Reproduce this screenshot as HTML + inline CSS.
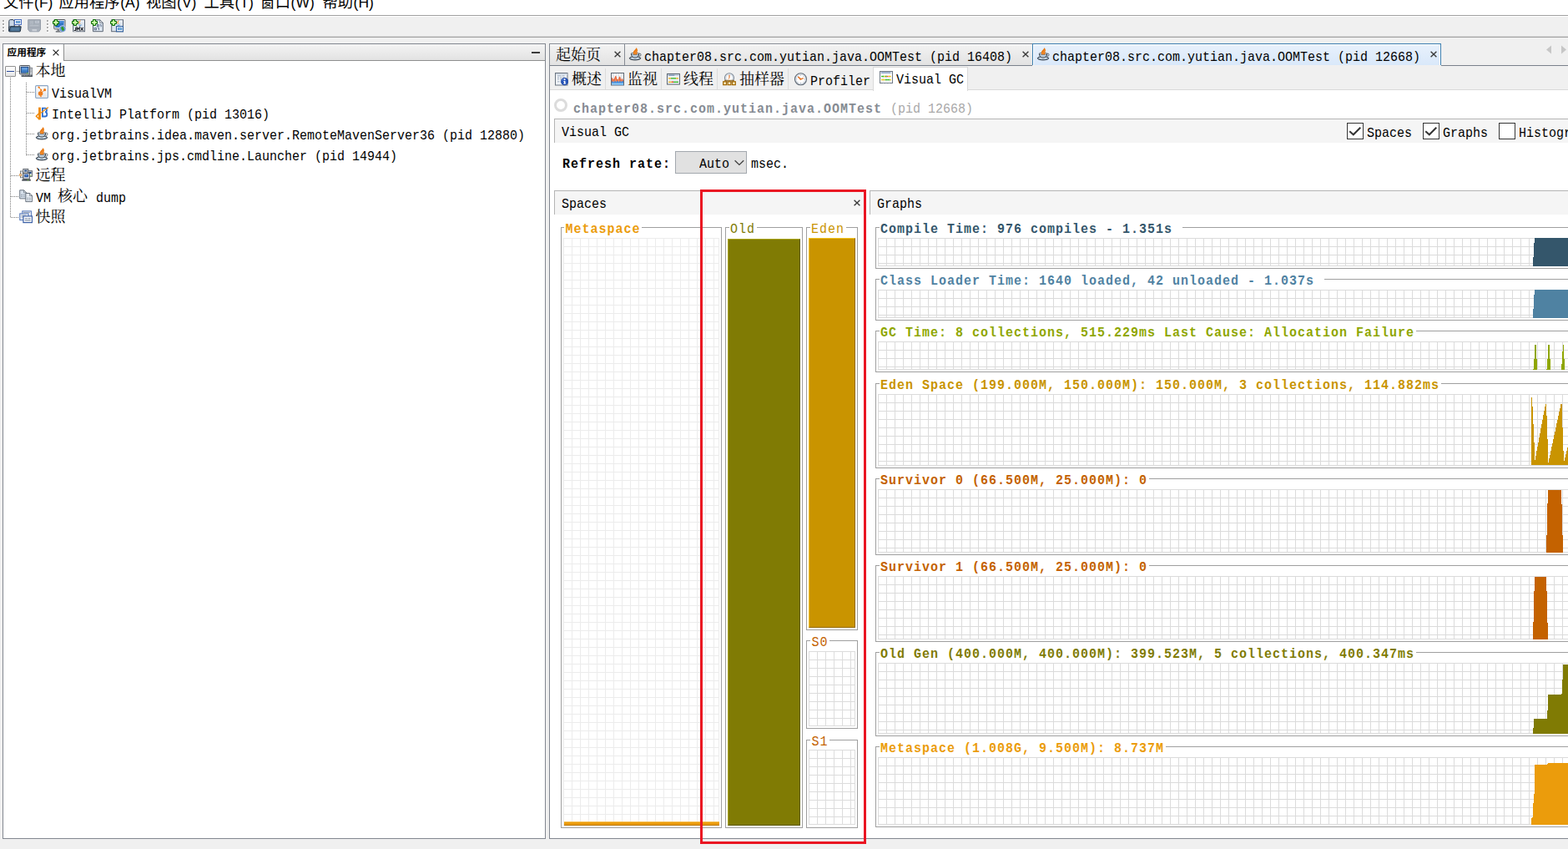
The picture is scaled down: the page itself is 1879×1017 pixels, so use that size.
<!DOCTYPE html>
<html lang="zh"><head><meta charset="utf-8"><title>VisualVM - Visual GC</title>
<style>
html,body{margin:0;padding:0}
body{width:1879px;height:1017px;overflow:hidden;background:#f0f0f0;position:relative;font-family:"Liberation Mono",monospace;font-size:15px}
body div,body span.m,body span.cj,svg.ic,.abs{position:absolute;box-sizing:border-box}
.m{font-family:"Liberation Mono",monospace;font-size:15px;line-height:18px;height:18px;white-space:pre;transform:scaleY(1.13);transform-origin:0 12px}
.m.b{font-weight:bold;letter-spacing:1px}
.s{font-family:"Liberation Sans",sans-serif}
.cj{display:block;overflow:visible}
.ct{position:absolute;left:0;top:0;color:#000;white-space:nowrap;font-family:"Liberation Sans","Noto Sans CJK SC",sans-serif;overflow:visible;width:100%;height:100%}
.ct.sf{font-family:"Liberation Serif","Noto Serif CJK SC",serif}
.ct.bd{font-weight:bold}

</style></head>
<body>
<div style="left:0px;top:0px;width:1879px;height:18px;background:#fff"></div>
<div style="left:0px;top:18px;width:1879px;height:1px;background:#a0a0a0"></div>
<div style="left:0px;top:19px;width:1879px;height:1px;background:#fff"></div>
<span class="cj" style="left:4px;top:-6px;width:36.6px;height:18.3px"><span class="ct" style="font-size:18.3px;line-height:18.3px">文件</span></span>
<span class="abs s" style="left:41.1px;top:-7px;font-size:17.5px;line-height:20px;white-space:pre">(F)</span>
<span class="cj" style="left:70.5px;top:-6px;width:73.2px;height:18.3px"><span class="ct" style="font-size:18.3px;line-height:18.3px">应用程序</span></span>
<span class="abs s" style="left:144.2px;top:-7px;font-size:17.5px;line-height:20px;white-space:pre">(A)</span>
<span class="cj" style="left:175px;top:-6px;width:36.6px;height:18.3px"><span class="ct" style="font-size:18.3px;line-height:18.3px">视图</span></span>
<span class="abs s" style="left:212.1px;top:-7px;font-size:17.5px;line-height:20px;white-space:pre">(V)</span>
<span class="cj" style="left:244.5px;top:-6px;width:36.6px;height:18.3px"><span class="ct" style="font-size:18.3px;line-height:18.3px">工具</span></span>
<span class="abs s" style="left:281.6px;top:-7px;font-size:17.5px;line-height:20px;white-space:pre">(T)</span>
<span class="cj" style="left:311.5px;top:-6px;width:36.6px;height:18.3px"><span class="ct" style="font-size:18.3px;line-height:18.3px">窗口</span></span>
<span class="abs s" style="left:348.6px;top:-7px;font-size:17.5px;line-height:20px;white-space:pre">(W)</span>
<span class="cj" style="left:386.5px;top:-6px;width:36.6px;height:18.3px"><span class="ct" style="font-size:18.3px;line-height:18.3px">帮助</span></span>
<span class="abs s" style="left:423.6px;top:-7px;font-size:17.5px;line-height:20px;white-space:pre">(H)</span>
<div style="left:0px;top:44px;width:1879px;height:1px;background:#a0a0a0"></div>
<div style="left:0px;top:43px;width:1879px;height:1px;background:#dcdcdc"></div>
<div style="left:3px;top:24px;width:3px;height:3px;background:#fff"></div>
<div style="left:3px;top:24px;width:2px;height:2px;background:#adadad"></div>
<div style="left:3px;top:28px;width:3px;height:3px;background:#fff"></div>
<div style="left:3px;top:28px;width:2px;height:2px;background:#adadad"></div>
<div style="left:3px;top:32px;width:3px;height:3px;background:#fff"></div>
<div style="left:3px;top:32px;width:2px;height:2px;background:#adadad"></div>
<div style="left:3px;top:36px;width:3px;height:3px;background:#fff"></div>
<div style="left:3px;top:36px;width:2px;height:2px;background:#adadad"></div>
<div style="left:56px;top:24px;width:3px;height:3px;background:#fff"></div>
<div style="left:56px;top:24px;width:2px;height:2px;background:#adadad"></div>
<div style="left:56px;top:28px;width:3px;height:3px;background:#fff"></div>
<div style="left:56px;top:28px;width:2px;height:2px;background:#adadad"></div>
<div style="left:56px;top:32px;width:3px;height:3px;background:#fff"></div>
<div style="left:56px;top:32px;width:2px;height:2px;background:#adadad"></div>
<div style="left:56px;top:36px;width:3px;height:3px;background:#fff"></div>
<div style="left:56px;top:36px;width:2px;height:2px;background:#adadad"></div>
<svg class="ic" style="left:10px;top:23px" width="16" height="16" viewBox="0 0 16 16"><path d="M.8 14.300V2.600C.8 1.300 1.600.6 2.600.6h3.200l1.400 2V9H.8z" fill="#c9d7e6" stroke="#2b3b4d" stroke-width="1"/><path d="M2.800 8.800h12.400l-.8 5.400c-.1.500-.4.700-.9.700H1.600c-.5 0-.8-.3-.8-.8z" fill="#3f6486" stroke="#263545" stroke-width="1"/><path d="M3.800 10v4M5.500 10v4M7.200 10v4M8.900 10v4M10.600 10v4M12.300 10v4" stroke="#6a95b8" stroke-width=".8"/><path d="M13 6.800v2" stroke="#2b3b4d" stroke-width="1"/><rect x="7.500" y=".5" width="8" height="6" fill="#fff" stroke="#4a6fc0"/><rect x="9.300" y="2.500" width="4.600" height="2" fill="#7db3e0" stroke="#3f7fc0" stroke-width=".7"/></svg>
<svg class="ic" style="left:33px;top:23px" width="16" height="16" viewBox="0 0 16 16"><path d="M.7 .7h14.800v11.500l-1.800 2.600H2.500L.7 12.200z" fill="#a9b1bb" stroke="#959da8"/><rect x="2.800" y="1.300" width="4.400" height="5.600" fill="#bcc3cc" stroke="#9aa2ad" stroke-width=".6"/><path d="M3.400 2.800h3.200M3.400 4.200h3.200M3.400 5.600h3.200" stroke="#a2aab4" stroke-width=".7"/><rect x="8.300" y="1.300" width="6" height="3.800" fill="#c2c9d2" stroke="#9aa2ad" stroke-width=".6"/><rect x="9.800" y="2.400" width="3" height="1.500" fill="#b0b8c3"/><path d="M2.800 7.800h10.500" stroke="#bfc6cf" stroke-width=".9"/><path d="M1.500 9.800h13" stroke="#9aa2ad" stroke-width=".7"/><rect x="5.500" y="12" width="5.600" height="2.200" fill="#cdd2d9"/></svg>
<svg class="ic" style="left:63px;top:23px" width="16" height="16" viewBox="0 0 16 16"><rect x="1.800" y=".5" width="13.200" height="11.300" rx=".6" fill="#e3e6ea" stroke="#555b63"/><rect x="3.300" y="2" width="10.200" height="8" fill="#2f73c3"/><path d="M3.300 2h10.200v2.500H3.300z" fill="#4a8ad8"/><path d="M5.500 13.200h5M3.800 14.800h8" stroke="#50565e" stroke-width="1.300"/><circle cx="12" cy="11.500" r="3.800" fill="#6f9fe0" stroke="#dfe8f5" stroke-width=".9"/><circle cx="12" cy="11.500" r="3.300" fill="none" stroke="#4a6fb8" stroke-width=".5"/><path d="M10.400 9.600c1-.8 2.200-.6 3 .1-.3.900 0 1.600.8 2.200-.4 1.200-1.400 2-2.400 2.300.1-1-.2-1.600-1.100-1.800-.5-.9-.5-2-.3-2.800z" fill="#2d9a1e"/><path d="M2.500 .5h3v2h2v3h-2v2h-3v-2h-2v-3h2z" fill="#6fd04a" stroke="#0f6e0a" stroke-width="1"/><path d="M3.300 1.300h1.400v2h2v1.400h-2v2h-1.400v-2h-2v-1.400h2z" fill="#d9f7b8"/></svg>
<svg class="ic" style="left:86px;top:23px" width="16" height="16" viewBox="0 0 16 16"><rect x="1.700" y=".8" width="13.800" height="13.900" fill="#dde6f0" stroke="#5c6675"/><path d="M2.500 1.500h12.200v2H2.500z" fill="#eef3f9"/><path d="M10.300 1.300c1.200 1-.9 1.700-.9 2.600s1 1.300 1.300 2.200c-1.800-.6-2.600-1.500-2.400-2.500.2-1 1.600-1.400 2-2.300z" fill="#ef8a1f"/><path d="M8.300 6.700c1 .6 2.400.6 3.400 0M9 7.800c.8.300 1.600.300 2.300 0" stroke="#3f86d0" stroke-width=".7" fill="none"/><g stroke="#fff" stroke-width="2.400" fill="none" stroke-linejoin="round"><path d="M2.800 13c.4 1 1.900 1 1.900-.3v-2.900M6.200 13.700V9.800l1.500 2 1.500-2v3.900M10.600 9.800l3.200 3.900M13.800 9.800l-3.200 3.900"/></g><g stroke="#20252d" stroke-width="1.200" fill="none"><path d="M2.800 13c.4 1 1.900 1 1.900-.3v-2.900M6.200 13.700V9.800l1.500 2 1.500-2v3.900M10.600 9.800l3.200 3.900M13.800 9.800l-3.200 3.900"/></g><path d="M2.500 .5h3v2h2v3h-2v2h-3v-2h-2v-3h2z" fill="#6fd04a" stroke="#0f6e0a" stroke-width="1"/><path d="M3.300 1.300h1.400v2h2v1.400h-2v2h-1.400v-2h-2v-1.400h2z" fill="#d9f7b8"/></svg>
<svg class="ic" style="left:109px;top:23px" width="16" height="16" viewBox="0 0 16 16"><path d="M2.500 .8h8.300l3.500 3.500v10.400H2.500z" fill="#dde6f0" stroke="#5c6675"/><path d="M10.800 .8v3.500h3.500z" fill="#f8fafc" stroke="#5c6675" stroke-width=".8"/><g stroke="#566785" stroke-width=".9" fill="none"><rect x="7.500" y="6.700" width="1.800" height="2.100"/><path d="M10.800 6.700h1.300v2.500"/><rect x="4.200" y="10.600" width="2.200" height="2.100"/><path d="M8.200 10.600h1.300v2.500"/></g><path d="M2.500 .5h3v2h2v3h-2v2h-3v-2h-2v-3h2z" fill="#6fd04a" stroke="#0f6e0a" stroke-width="1"/><path d="M3.300 1.300h1.400v2h2v1.400h-2v2h-1.400v-2h-2v-1.400h2z" fill="#d9f7b8"/></svg>
<svg class="ic" style="left:132px;top:23px" width="16" height="16" viewBox="0 0 16 16"><rect x="1.700" y=".8" width="13.800" height="13.900" fill="#dde6f0" stroke="#5c6675"/><path d="M2.500 1.500h12.200v2H2.500z" fill="#eef3f9"/><path d="M10.300 1.300c1.200 1-.9 1.700-.9 2.600s1 1.300 1.300 2.200c-1.800-.6-2.600-1.500-2.400-2.500.2-1 1.600-1.400 2-2.300z" fill="#ef8a1f"/><path d="M8.300 6.700c1 .6 2.400.6 3.400 0M9 7.800c.8.300 1.600.300 2.300 0" stroke="#3f86d0" stroke-width=".7" fill="none"/><rect x="7.500" y="8.600" width="8" height="6.200" fill="#fff" stroke="#2f5f9f" stroke-width="1.100"/><rect x="9.300" y="10.600" width="4.600" height="2" fill="#8cc0ea" stroke="#3f86c8" stroke-width=".8"/><path d="M2.500 .5h3v2h2v3h-2v2h-3v-2h-2v-3h2z" fill="#6fd04a" stroke="#0f6e0a" stroke-width="1"/><path d="M3.300 1.300h1.400v2h2v1.400h-2v2h-1.400v-2h-2v-1.400h2z" fill="#d9f7b8"/></svg>
<div style="left:3px;top:52px;width:651px;height:953px;border:1px solid #828790;background:#fff"></div>
<div style="left:4px;top:53px;width:649px;height:19px;background:linear-gradient(#f4f4f4,#e2e2e2)"></div>
<div style="left:4px;top:72px;width:649px;height:1px;background:#8e8f8f"></div>
<div style="left:4px;top:53px;width:73px;height:20px;background:#fff;border-right:1px solid #8e8f8f"></div>
<span class="cj" style="left:8.5px;top:57px;width:46.8px;height:11.8px"><span class="ct bd" style="font-size:11.7px;line-height:11.8px">应用程序</span></span>
<svg class="ic" style="left:63px;top:59px" width="8" height="8" viewBox="0 0 8 8"><path d="M.6.6l6.800 6.800M7.400.6L.6 7.400" stroke="#2a2a2a" stroke-width="1.300"/></svg>
<div style="left:637px;top:62px;width:10px;height:2px;background:#3a3a3a"></div>
<div style="left:12px;top:93px;width:1px;height:168px;background:repeating-linear-gradient(to bottom,#7a7a7a 0 1px,transparent 1px 2px)"></div>
<div style="left:31px;top:99px;width:1px;height:87px;background:repeating-linear-gradient(to bottom,#7a7a7a 0 1px,transparent 1px 2px)"></div>
<div style="left:20px;top:85px;width:3px;height:1px;background:repeating-linear-gradient(to right,#7a7a7a 0 1px,transparent 1px 2px)"></div>
<div style="left:32px;top:110px;width:10px;height:1px;background:repeating-linear-gradient(to right,#7a7a7a 0 1px,transparent 1px 2px)"></div>
<div style="left:32px;top:135px;width:10px;height:1px;background:repeating-linear-gradient(to right,#7a7a7a 0 1px,transparent 1px 2px)"></div>
<div style="left:32px;top:160px;width:10px;height:1px;background:repeating-linear-gradient(to right,#7a7a7a 0 1px,transparent 1px 2px)"></div>
<div style="left:32px;top:185px;width:10px;height:1px;background:repeating-linear-gradient(to right,#7a7a7a 0 1px,transparent 1px 2px)"></div>
<div style="left:13px;top:210px;width:10px;height:1px;background:repeating-linear-gradient(to right,#7a7a7a 0 1px,transparent 1px 2px)"></div>
<div style="left:13px;top:235px;width:10px;height:1px;background:repeating-linear-gradient(to right,#7a7a7a 0 1px,transparent 1px 2px)"></div>
<div style="left:13px;top:260px;width:10px;height:1px;background:repeating-linear-gradient(to right,#7a7a7a 0 1px,transparent 1px 2px)"></div>
<div style="left:6px;top:79px;width:13px;height:13px;border:1px solid #919191;background:linear-gradient(#fff,#e6e6e6);border-radius:1px"></div>
<div style="left:8px;top:85px;width:9px;height:1px;background:#2b4a9b"></div>
<svg class="ic" style="left:23px;top:78px" width="16" height="16" viewBox="0 0 16 16"><rect x="12.500" y="3.300" width="3.200" height="10.300" fill="#d5d9de" stroke="#6b7078" stroke-width=".8"/><path d="M13.300 5.500h1.600M13.300 7.500h1.600" stroke="#9aa0a8" stroke-width=".6"/><rect x=".5" y=".5" width="12.200" height="10.300" rx=".8" fill="#d9dce0" stroke="#50555c"/><rect x="2.300" y="2.300" width="8.600" height="6.800" fill="#3f7fc8" stroke="#17407d" stroke-width=".9"/><path d="M3.300 3.300h6.600v2.200H3.300z" fill="#6aa2e0"/><rect x="9" y="9.200" width="1.300" height=".9" fill="#7fe62a"/><path d="M2.600 11.600h13v2.300h-13z" fill="#3e444c"/><path d="M3.300 12.300h7.200M11.600 12.300h3.300" stroke="#d5dade" stroke-width=".7" stroke-dasharray=".9 .5"/></svg>
<span class="cj" style="left:42.5px;top:75.5px;width:36px;height:18px"><span class="ct sf" style="font-size:18px;line-height:18px">本地</span></span>
<svg class="ic" style="left:42px;top:102px" width="16" height="16" viewBox="0 0 16 16"><defs><linearGradient id="vvg" x1="0" y1="0" x2="0" y2="1"><stop offset="0" stop-color="#fff"/><stop offset="1" stop-color="#e2e4e7"/></linearGradient></defs><rect x=".6" y=".6" width="14.900" height="14.900" rx="1.200" fill="url(#vvg)" stroke="#8aa5c4" stroke-width="1.100"/><g fill="#f07d1c" stroke="#f07d1c"><circle cx="6.600" cy="10" r="2.800" stroke="none"/><circle cx="7" cy="13.500" r=".8" stroke="none"/><circle cx="11.600" cy="5.700" r="1.600" stroke="none"/><circle cx="7.300" cy="5.900" r="1.100" stroke="none"/><circle cx="4.600" cy="2.600" r=".8" stroke="none"/><path d="M4.600 1.300v2.600M3.300 2.600h2.600" stroke-width=".7"/><path d="M4.600 2.600L7.300 5.900 6.600 10l5-4.300M6.600 10L7 13.500" stroke-width=".9" fill="none"/></g></svg>
<span class="m" style="left:62px;top:105px;color:#000;">VisualVM</span>
<svg class="ic" style="left:42px;top:127.5px" width="16" height="16" viewBox="0 0 16 16"><path d="M5.500 .6v14.700" stroke="#f08a0a" stroke-width="2.800"/><path d="M5.200 7.300L1.400 11.300l4 3.800" stroke="#f08a0a" stroke-width="1.500" fill="none"/><path d="M8.900 1.700h3.100c2.700 0 2.700 4.400 0 4.500 3.100.1 3.100 5.300 0 5.300H8.900z" stroke="#2f6fd0" stroke-width="1.800" fill="none"/><path d="M7 7.300L16 .5" stroke="#f08a0a" stroke-width="1.100"/></svg>
<span class="m" style="left:62px;top:130px;color:#000;">IntelliJ Platform (pid 13016)</span>
<svg class="ic" style="left:42px;top:152px" width="16" height="16" viewBox="0 0 16 16"><ellipse cx="8" cy="12.800" rx="6.700" ry="2.100" fill="#9fb4c8" stroke="#2a333d" stroke-width="1"/><ellipse cx="8" cy="12.400" rx="4.600" ry="1" fill="#dbe5ee"/><path d="M3.300 7.300c0 3.300 2.100 4.800 4.700 4.800s4.700-1.500 4.700-4.800z" fill="#bccddd" stroke="#2f3943" stroke-width=".9"/><ellipse cx="8" cy="7.300" rx="4.700" ry="1.100" fill="#e8eef4" stroke="#3a4550" stroke-width=".7"/><ellipse cx="13.700" cy="8.600" rx="1.300" ry="1.500" fill="none" stroke="#3a4550" stroke-width=".8"/><path d="M9.600 0c1.700 2.300 1.700 4.200.8 5.400.5 1 .2 2.100-.5 2.800H6.400c-1-1.700-.6-3.600.8-4.900C8.200 2.400 9.200 1.400 9.600 0z" fill="#e9770f"/><path d="M7.200 6.600L9.900 3.100M8.100 7.500l2-2.600" stroke="#f9c998" stroke-width=".6" stroke-dasharray=".9 .6"/></svg>
<span class="m" style="left:62px;top:155px;color:#000;">org.jetbrains.idea.maven.server.RemoteMavenServer36 (pid 12880)</span>
<svg class="ic" style="left:42px;top:177px" width="16" height="16" viewBox="0 0 16 16"><ellipse cx="8" cy="12.800" rx="6.700" ry="2.100" fill="#9fb4c8" stroke="#2a333d" stroke-width="1"/><ellipse cx="8" cy="12.400" rx="4.600" ry="1" fill="#dbe5ee"/><path d="M3.300 7.300c0 3.300 2.100 4.800 4.700 4.800s4.700-1.500 4.700-4.800z" fill="#bccddd" stroke="#2f3943" stroke-width=".9"/><ellipse cx="8" cy="7.300" rx="4.700" ry="1.100" fill="#e8eef4" stroke="#3a4550" stroke-width=".7"/><ellipse cx="13.700" cy="8.600" rx="1.300" ry="1.500" fill="none" stroke="#3a4550" stroke-width=".8"/><path d="M9.600 0c1.700 2.300 1.700 4.200.8 5.400.5 1 .2 2.100-.5 2.800H6.400c-1-1.700-.6-3.600.8-4.900C8.200 2.400 9.200 1.400 9.600 0z" fill="#e9770f"/><path d="M7.200 6.600L9.900 3.100M8.100 7.500l2-2.600" stroke="#f9c998" stroke-width=".6" stroke-dasharray=".9 .6"/></svg>
<span class="m" style="left:62px;top:180px;color:#000;">org.jetbrains.jps.cmdline.Launcher (pid 14944)</span>
<svg class="ic" style="left:23px;top:202px" width="16" height="16" viewBox="0 0 16 16"><rect x="1.400" y="3" width="3.800" height="7.800" fill="#dfe3e8" stroke="#6a7078" stroke-width=".8"/><rect x="4.800" y=".5" width="6" height="4.900" fill="#dfe3e8" stroke="#555b63" stroke-width=".9"/><rect x="6.200" y="1.700" width="3.200" height="1.800" fill="#17407d"/><rect x="10.400" y="2.700" width="5.200" height="6.600" fill="#dfe3e8" stroke="#555b63" stroke-width=".9"/><rect x="11.500" y="3.800" width="3" height="2.200" fill="#17407d"/><rect x="13.300" y="7.700" width="1.200" height=".9" fill="#7fe62a"/><rect x="4.900" y="5.300" width="7.400" height="7" fill="#e6e9ed" stroke="#44494f" stroke-width="1"/><rect x="6.300" y="6.700" width="4.600" height="3.600" fill="#1f4fa0"/><rect x="7.300" y="7.600" width="2.600" height="1.400" fill="#5a8edb"/><path d="M3.300 12.800h10.500v1.900H3.300z" fill="#4a5058"/><rect x="9.900" y="13.300" width="1.200" height=".9" fill="#7fe62a"/><circle cx="1.500" cy="7.600" r="1.200" fill="#fff" stroke="#d07810" stroke-width="1"/></svg>
<span class="cj" style="left:42.5px;top:200.5px;width:36px;height:18px"><span class="ct sf" style="font-size:18px;line-height:18px">远程</span></span>
<svg class="ic" style="left:23px;top:227px" width="16" height="16" viewBox="0 0 16 16"><path d="M.7 .8h4.800l3 3v7.100H.7z" fill="#d5dfea" stroke="#5f6b78" stroke-width=".9"/><path d="M5.500 .8v3h3z" fill="#f3f6f9" stroke="#5f6b78" stroke-width=".7"/><path d="M2 6.300h2M4.700 6.300h2M2 8.300h2M4.700 8.300h2" stroke="#8a97a6" stroke-width=".9"/><path d="M7.800 4.500h4.800l3 3v7.100H7.800z" fill="#e3e9f0" stroke="#5a6470" stroke-width=".9"/><path d="M12.600 4.500v3h3z" fill="#f8fafc" stroke="#5a6470" stroke-width=".7"/><path d="M9.300 10.300h2M12 10.300h2M9.300 12.300h2M12 12.300h2" stroke="#8a97a6" stroke-width=".9"/></svg>
<span class="m" style="left:43px;top:230px;color:#000;">VM</span>
<span class="cj" style="left:69.0px;top:225.5px;width:36px;height:18px"><span class="ct sf" style="font-size:18px;line-height:18px">核心</span></span>
<span class="m" style="left:115px;top:230px;color:#000;">dump</span>
<svg class="ic" style="left:23px;top:252px" width="16" height="16" viewBox="0 0 16 16"><rect x="3.800" y=".9" width="10.600" height="7.500" fill="#f4f6fa" stroke="#4a6fb5"/><path d="M5 2.500h8" stroke="#9aa6b8" stroke-width="1"/><rect x=".8" y="3.900" width="10.300" height="7.700" fill="#f0f3f8" stroke="#4a6fb5"/><path d="M2.300 6h6M2.300 8h3" stroke="#9aa7b8" stroke-width="1"/><rect x="4.900" y="6.900" width="10.600" height="7.700" fill="#f7f9fc" stroke="#3a5fa5" stroke-width="1.200"/><rect x="6.800" y="9" width="3" height="1.600" fill="#a3afbf"/><rect x="10.500" y="9" width="3.200" height="1.600" fill="#a3afbf"/><rect x="6.800" y="11.300" width="6.900" height="1.600" fill="#a3afbf"/></svg>
<span class="cj" style="left:42.5px;top:250.5px;width:36px;height:18px"><span class="ct sf" style="font-size:18px;line-height:18px">快照</span></span>
<div style="left:658px;top:52px;width:1230px;height:953px;border:1px solid #828790;border-top:0;background:#fff"></div>
<div style="left:659px;top:52px;width:1220px;height:26px;background:#f0f0f0"></div>
<div style="left:659px;top:78px;width:578px;height:1px;background:#7a818c"></div>
<div style="left:1727px;top:78px;width:160px;height:1px;background:#7a818c"></div>
<div style="left:1237px;top:78px;width:490px;height:1px;background:#f0f0f0"></div>
<div style="left:659px;top:79px;width:1220px;height:29px;background:#f0f0f0"></div>
<div style="left:658px;top:52px;width:91px;height:26px;background:linear-gradient(#f3f3f3,#e2e2e2);border:1px solid #868b94;border-bottom:0;box-shadow:inset 0 1px 0 #fff"></div>
<div style="left:748px;top:52px;width:490px;height:26px;background:linear-gradient(#f3f3f3,#e2e2e2);border:1px solid #868b94;border-bottom:0;box-shadow:inset 0 1px 0 #fff"></div>
<div style="left:1237px;top:52px;width:490px;height:26px;background:linear-gradient(#e8f1fc,#d9e8fa);border:1px solid #3c7fb1;border-bottom:0;box-shadow:inset 1px 1px 0 #fff,inset -1px 0 0 #fff"></div>
<span class="cj" style="left:666.0px;top:56.5px;width:54px;height:18px"><span class="ct sf" style="font-size:18px;line-height:18px">起始页</span></span>
<svg class="ic" style="left:736px;top:61px" width="8" height="8" viewBox="0 0 8 8"><path d="M.6.8l6.800 6.400M7.400.8L.6 7.200" stroke="#3a3a3a" stroke-width="1.400"/></svg>
<svg class="ic" style="left:753px;top:57px" width="16" height="16" viewBox="0 0 16 16"><ellipse cx="8" cy="12.800" rx="6.700" ry="2.100" fill="#9fb4c8" stroke="#2a333d" stroke-width="1"/><ellipse cx="8" cy="12.400" rx="4.600" ry="1" fill="#dbe5ee"/><path d="M3.300 7.300c0 3.300 2.100 4.800 4.700 4.800s4.700-1.500 4.700-4.800z" fill="#bccddd" stroke="#2f3943" stroke-width=".9"/><ellipse cx="8" cy="7.300" rx="4.700" ry="1.100" fill="#e8eef4" stroke="#3a4550" stroke-width=".7"/><ellipse cx="13.700" cy="8.600" rx="1.300" ry="1.500" fill="none" stroke="#3a4550" stroke-width=".8"/><path d="M9.600 0c1.700 2.300 1.700 4.200.8 5.400.5 1 .2 2.100-.5 2.800H6.400c-1-1.700-.6-3.600.8-4.900C8.200 2.400 9.200 1.400 9.600 0z" fill="#e9770f"/><path d="M7.200 6.600L9.900 3.100M8.100 7.500l2-2.600" stroke="#f9c998" stroke-width=".6" stroke-dasharray=".9 .6"/></svg>
<span class="m" style="left:772px;top:61px;color:#000;">chapter08.src.com.yutian.java.OOMTest (pid 16408)</span>
<svg class="ic" style="left:1225px;top:61px" width="8" height="8" viewBox="0 0 8 8"><path d="M.6.8l6.800 6.400M7.400.8L.6 7.200" stroke="#3a3a3a" stroke-width="1.400"/></svg>
<svg class="ic" style="left:1242px;top:57px" width="16" height="16" viewBox="0 0 16 16"><ellipse cx="8" cy="12.800" rx="6.700" ry="2.100" fill="#9fb4c8" stroke="#2a333d" stroke-width="1"/><ellipse cx="8" cy="12.400" rx="4.600" ry="1" fill="#dbe5ee"/><path d="M3.300 7.300c0 3.300 2.100 4.800 4.700 4.800s4.700-1.500 4.700-4.800z" fill="#bccddd" stroke="#2f3943" stroke-width=".9"/><ellipse cx="8" cy="7.300" rx="4.700" ry="1.100" fill="#e8eef4" stroke="#3a4550" stroke-width=".7"/><ellipse cx="13.700" cy="8.600" rx="1.300" ry="1.500" fill="none" stroke="#3a4550" stroke-width=".8"/><path d="M9.600 0c1.700 2.300 1.700 4.200.8 5.400.5 1 .2 2.100-.5 2.800H6.400c-1-1.700-.6-3.600.8-4.900C8.200 2.400 9.200 1.400 9.600 0z" fill="#e9770f"/><path d="M7.200 6.600L9.900 3.100M8.100 7.500l2-2.600" stroke="#f9c998" stroke-width=".6" stroke-dasharray=".9 .6"/></svg>
<span class="m" style="left:1261px;top:61px;color:#000;">chapter08.src.com.yutian.java.OOMTest (pid 12668)</span>
<svg class="ic" style="left:1713.5px;top:61px" width="8" height="8" viewBox="0 0 8 8"><path d="M.6.8l6.800 6.400M7.400.8L.6 7.200" stroke="#3a3a3a" stroke-width="1.400"/></svg>
<svg class="ic" style="left:1852px;top:54px" width="26" height="11" viewBox="0 0 26 11"><path d="M7 .5v10L1 5.500z" fill="#c6c6c6"/><path d="M19 .5v10l6-5z" fill="#c6c6c6"/></svg>
<div style="left:725px;top:82px;width:1px;height:25px;background:#dcdcdc"></div>
<div style="left:792px;top:82px;width:1px;height:25px;background:#dcdcdc"></div>
<div style="left:859px;top:82px;width:1px;height:25px;background:#dcdcdc"></div>
<div style="left:944px;top:82px;width:1px;height:25px;background:#dcdcdc"></div>
<div style="left:659px;top:107px;width:1220px;height:1px;background:#d9d9d9"></div>
<div style="left:1046px;top:80px;width:114px;height:29px;background:#fff;border:1px solid #dadada;border-bottom:0"></div>
<svg class="ic" style="left:665px;top:87px" width="16" height="16" viewBox="0 0 16 16"><rect x=".5" y=".5" width="14.500" height="14.500" fill="#eef2f7" stroke="#6a7480"/><rect x="1" y="1" width="13.500" height="1.800" fill="#d3dbe5"/><path d="M3 3.800h4.500M8.500 3.800h3M3 5.800h2M6 5.800h2.500M9.500 5.800h2M3 7.800h2M6 7.800h2M3 10.800h2.500" stroke="#9ba9ba" stroke-width=".9"/><circle cx="11.600" cy="10.600" r="4.300" fill="#2452b8" stroke="#1a3f94" stroke-width=".6"/><path d="M11.600 7.400a3.300 3.300 0 0 0-3 2" stroke="#7fa2e8" stroke-width=".8" fill="none"/><rect x="10.900" y="10" width="1.600" height="3.300" fill="#fff"/><rect x="10.200" y="10" width="1.500" height=".8" fill="#fff"/><rect x="10.200" y="12.600" width="3" height=".8" fill="#fff"/><circle cx="11.700" cy="8.300" r=".95" fill="#fff"/></svg>
<span class="cj" style="left:685.0px;top:86.0px;width:36px;height:18px"><span class="ct sf" style="font-size:18px;line-height:18px">概述</span></span>
<svg class="ic" style="left:732px;top:87px" width="16" height="16" viewBox="0 0 16 16"><rect x=".5" y=".5" width="15" height="14.500" fill="#fbfcfd" stroke="#5f6975"/><path d="M3.300 1v13M6.300 1v13M9.300 1v13M12.300 1v13" stroke="#c3cbd5" stroke-width=".7"/><path d="M1 14.500V7l.8-1.500 1 3 1.400-1.500L5.300 4l1 0 1.200 4 1.400 0 1.300-3.500 1 .5 1.200 4 1.300-2.500 1.300 3v5.500z" fill="#e8693f"/><path d="M2 14v-4l1-1 1.300 1.700L5.600 6l1.200 4.300 1.200.2 1.400-3.500 1.300 3.500 1.200 0 1-2 1.100 2v3.500z" fill="#f2a273" opacity=".7"/><path d="M1 14.500v-3l1.200-1.500 1.400 1.800L5 9.500l1.400 2L8 9.500l1.400 2 1.600-2 1.400 2 1.400-2 1.200 1.500v4z" fill="#3a8ae0"/><path d="M1 14.500v-1.500h14v1.500z" fill="#8ccbf5"/><path d="M1.500 12.500h13" stroke="#c6e6fb" stroke-width=".7" stroke-dasharray="1 1"/></svg>
<span class="cj" style="left:752.0px;top:86.0px;width:36px;height:18px"><span class="ct sf" style="font-size:18px;line-height:18px">监视</span></span>
<svg class="ic" style="left:799px;top:87px" width="16" height="16" viewBox="0 0 16 16"><rect x=".5" y="1.500" width="15" height="12.500" fill="#f8fafc" stroke="#5f6975" stroke-width="1.100"/><rect x="1.200" y="2.200" width="13.600" height="2" fill="#c3cfdf"/><path d="M2.300 3.200h7" stroke="#5d77a0" stroke-width=".9"/><path d="M2 6.800h3" stroke="#e8b020" stroke-width="1.400"/><path d="M5 6.800h6" stroke="#35b52a" stroke-width="1.400"/><path d="M11 6.800h3" stroke="#e8b020" stroke-width="1.400"/><path d="M2 9h12" stroke="#c7ced7" stroke-width=".7"/><path d="M2 11.300h4" stroke="#e8b020" stroke-width="1.400"/><path d="M6 11.300h2" stroke="#e0452c" stroke-width="1.400"/><path d="M8 11.300h6" stroke="#35b52a" stroke-width="1.400"/></svg>
<span class="cj" style="left:819.0px;top:86.0px;width:36px;height:18px"><span class="ct sf" style="font-size:18px;line-height:18px">线程</span></span>
<svg class="ic" style="left:866px;top:87px" width="16" height="16" viewBox="0 0 16 16"><circle cx="8" cy="6.300" r="5.500" fill="#e9eff6" stroke="#7c8794" stroke-width="1.100"/><circle cx="8" cy="6.300" r="3.900" fill="#fff" stroke="#c1cbd7" stroke-width=".6"/><path d="M8 2.800v3.800" stroke="#e0762a" stroke-width="1.200"/><path d="M8 6.600l-1.300 1.200" stroke="#e0762a" stroke-width=".9"/><path d="M2.600 11V9.300h10.800V11M8 9.300V11" stroke="#8c5a06" stroke-width=".9" fill="none"/><rect x=".7" y="10.800" width="3.800" height="3.800" fill="#fbefc5" stroke="#a46b08" stroke-width="1.300"/><rect x="6.100" y="10.800" width="3.800" height="3.800" fill="#fbefc5" stroke="#a46b08" stroke-width="1.300"/><rect x="11.500" y="10.800" width="3.800" height="3.800" fill="#fbefc5" stroke="#a46b08" stroke-width="1.300"/></svg>
<span class="cj" style="left:886.0px;top:86.0px;width:54px;height:18px"><span class="ct sf" style="font-size:18px;line-height:18px">抽样器</span></span>
<svg class="ic" style="left:952px;top:87px" width="16" height="16" viewBox="0 0 16 16"><circle cx="7.500" cy="7.800" r="7" fill="#eef2f7" stroke="#5f6975" stroke-width="1.100"/><circle cx="7.500" cy="7.800" r="5.500" fill="#fff" stroke="#c3ccd7" stroke-width=".7"/><path d="M7.500 7.800L4.300 4.800" stroke="#e7782a" stroke-width="1.700"/><path d="M7.500 7.800l3.300-1.200" stroke="#e7782a" stroke-width="1.300"/><circle cx="7.500" cy="7.800" r="1.100" fill="#e7782a"/><path d="M7.500 2.600v.9M7.500 12.100v.9M2.300 7.800h.9M11.800 7.800h.9M3.800 4.100l.6.600M10.600 10.900l.6.600M11.200 4.100l-.6.600M4.400 10.900l-.6.600" stroke="#8a95a3" stroke-width=".8"/></svg>
<span class="m" style="left:971px;top:90px;color:#000;">Profiler</span>
<svg class="ic" style="left:1054px;top:85px" width="16" height="16" viewBox="0 0 16 16"><rect x=".5" y=".5" width="15" height="14" fill="#fdfdfe" stroke="#6f7985"/><rect x="1.200" y="1.200" width="13.600" height="1.900" fill="#d3dbe6"/><path d="M2 2.100h11" stroke="#5f7fb5" stroke-width=".9"/><path d="M4.500 3.500v11M8 3.500v11M11.500 3.500v11M1 8.500h14M1 12.500h14" stroke="#dfe3e9" stroke-width=".6"/><path d="M2 6.500h3.500" stroke="#34c020" stroke-width="1.300"/><path d="M5.500 6.500h1.500" stroke="#f0c010" stroke-width="1.300"/><path d="M7 6.500h1.500" stroke="#34c020" stroke-width="1.300"/><path d="M8.500 6.500h1.800" stroke="#e8401c" stroke-width="1.300"/><path d="M10.300 6.500h3.500" stroke="#f0c010" stroke-width="1.300"/><path d="M2 10.600h4.500" stroke="#f0c010" stroke-width="1.300"/><path d="M6.500 10.600h6" stroke="#34c020" stroke-width="1.300"/><path d="M12.500 10.600h1.500" stroke="#f0c010" stroke-width="1.300"/></svg>
<span class="m" style="left:1074px;top:88px;color:#000;">Visual GC</span>
<div style="left:664px;top:118px;width:16px;height:16px;border:3px solid #dcdcdc;border-radius:50%"></div>
<span class="m b" style="left:687px;top:123px;color:#868b93;">chapter08.src.com.yutian.java.OOMTest</span>
<span class="m" style="left:1067px;top:123px;color:#a9a9a9;">(pid 12668)</span>
<div style="left:664px;top:142px;width:1215px;height:29px;background:#f5f5f5;border-left:1px solid #b4b4b4;border-top:1px solid #b4b4b4"></div>
<span class="m" style="left:673px;top:151px;color:#000;">Visual GC</span>
<div style="left:1614px;top:147px;width:20px;height:20px;border:1.500px solid #333;background:#fff;box-shadow:0 0 0 1px #fcfcfc"></div>
<svg class="ic" style="left:1614px;top:147px" width="20" height="20" viewBox="0 0 20 20"><path d="M3.300 10.300l4.500 4L16.300 5.800" stroke="#333" stroke-width="2" fill="none"/></svg>
<span class="m" style="left:1638px;top:152px;color:#000;">Spaces</span>
<div style="left:1705px;top:147px;width:20px;height:20px;border:1.500px solid #333;background:#fff;box-shadow:0 0 0 1px #fcfcfc"></div>
<svg class="ic" style="left:1705px;top:147px" width="20" height="20" viewBox="0 0 20 20"><path d="M3.300 10.300l4.500 4L16.300 5.800" stroke="#333" stroke-width="2" fill="none"/></svg>
<span class="m" style="left:1729px;top:152px;color:#000;">Graphs</span>
<div style="left:1796px;top:147px;width:20px;height:20px;border:1.500px solid #333;background:#fff;box-shadow:0 0 0 1px #fcfcfc"></div>
<span class="m" style="left:1820px;top:152px;color:#000;">Histogram</span>
<span class="m b" style="left:674px;top:189px;color:#000;">Refresh rate:</span>
<div style="left:809px;top:181px;width:86px;height:27px;background:#e1e1e1;border:1px solid #a3a8ae"></div>
<span class="m" style="left:838px;top:189px;color:#000;">Auto</span>
<svg class="ic" style="left:879.500px;top:191px" width="12" height="8" viewBox="0 0 12 8"><path d="M.6 1.200l5.300 5.200 5.300-5.200" stroke="#404040" stroke-width="1.300" fill="none"/></svg>
<span class="m" style="left:900px;top:189px;color:#000;">msec.</span>
<div style="left:664px;top:228px;width:373px;height:29px;background:#f5f5f5;border-left:1px solid #b4b4b4;border-top:1px solid #b4b4b4"></div>
<span class="m" style="left:673px;top:237px;color:#000;">Spaces</span>
<svg class="ic" style="left:1022.500px;top:238.500px" width="8" height="8" viewBox="0 0 8 8"><path d="M.6.8l6.800 6.400M7.400.8L.6 7.200" stroke="#3a3a3a" stroke-width="1.400"/></svg>
<div style="left:1042px;top:228px;width:840px;height:29px;background:#f5f5f5;border-left:1px solid #b4b4b4;border-top:1px solid #b4b4b4"></div>
<span class="m" style="left:1051px;top:237px;color:#000;">Graphs</span>
<div style="left:672px;top:272px;width:193px;height:720px;border:1px solid #9f9f9f;"></div>
<div style="left:676.0px;top:270px;width:93.0px;height:5px;background:#fff"></div>
<span class="m b" style="left:677.5px;top:267px;color:#eb9c0c;">Metaspace</span>
<div style="left:675px;top:285px;width:187px;height:704px;background-image:linear-gradient(to right,#ececec 1px,transparent 1px),linear-gradient(to bottom,#ececec 1px,transparent 1px);background-size:10px 10px;border-right:1px solid #ececec;border-bottom:1px solid #ececec"></div>
<div style="left:675.5px;top:983.5px;width:186.5px;height:5.5px;background:#eb9c0c;border-top:1px solid #f6c25a;border-bottom:1px solid #b87400"></div>
<div style="left:869px;top:272px;width:93px;height:720px;border:1px solid #9f9f9f;"></div>
<div style="left:873.5px;top:270px;width:33.0px;height:5px;background:#fff"></div>
<span class="m" style="left:875px;top:267px;color:#807b04;letter-spacing:1px">Old</span>
<div style="left:872px;top:286px;width:87px;height:703px;background:#807b04;border:1px solid;border-color:#a9a41a #5c5900 #5c5900 #a9a41a"></div>
<div style="left:966px;top:272px;width:62px;height:483px;border:1px solid #9f9f9f;"></div>
<div style="left:970.5px;top:270px;width:43.0px;height:5px;background:#fff"></div>
<span class="m" style="left:972px;top:267px;color:#c99400;letter-spacing:1px">Eden</span>
<div style="left:969px;top:285px;width:56px;height:467px;background:#c99400;border:1px solid;border-color:#f2c01a #946a00 #946a00 #f2c01a"></div>
<div style="left:966px;top:767px;width:62px;height:106px;border:1px solid #9f9f9f;"></div>
<div style="left:971.0px;top:765px;width:23.0px;height:5px;background:#fff"></div>
<span class="m" style="left:972.5px;top:762px;color:#c46200;letter-spacing:1px">S0</span>
<div style="left:969px;top:780px;width:56px;height:90px;background-image:linear-gradient(to right,#dcdcdc 1px,transparent 1px),linear-gradient(to bottom,#dcdcdc 1px,transparent 1px);background-size:10px 10px;border-right:1px solid #dcdcdc;border-bottom:1px solid #dcdcdc"></div>
<div style="left:966px;top:886px;width:62px;height:106px;border:1px solid #9f9f9f;"></div>
<div style="left:971.0px;top:884px;width:23.0px;height:5px;background:#fff"></div>
<span class="m" style="left:972.5px;top:881px;color:#c46200;letter-spacing:1px">S1</span>
<div style="left:969px;top:898px;width:56px;height:90px;background-image:linear-gradient(to right,#dcdcdc 1px,transparent 1px),linear-gradient(to bottom,#dcdcdc 1px,transparent 1px);background-size:10px 10px;border-right:1px solid #dcdcdc;border-bottom:1px solid #dcdcdc"></div>
<div style="left:1049px;top:272px;width:840px;height:50px;border:1px solid #9f9f9f;border-right:0;"></div>
<div style="left:1053.5px;top:270px;width:363.5px;height:5px;background:#fff"></div>
<span class="m b" style="left:1055px;top:267px;color:#34566b;">Compile Time: 976 compiles - 1.351s</span>
<div style="left:1052px;top:285px;width:840px;height:34px;background-image:linear-gradient(to right,#dbdbdb 1px,transparent 1px),linear-gradient(to bottom,#dbdbdb 1px,transparent 1px);background-size:10px 10px;border-right:1px solid #dbdbdb;border-bottom:1px solid #dbdbdb"></div>
<div style="left:1049px;top:334px;width:840px;height:50px;border:1px solid #9f9f9f;border-right:0;"></div>
<div style="left:1053.5px;top:332px;width:533.5px;height:5px;background:#fff"></div>
<span class="m b" style="left:1055px;top:329px;color:#4f82a2;">Class Loader Time: 1640 loaded, 42 unloaded - 1.037s</span>
<div style="left:1052px;top:347px;width:840px;height:34px;background-image:linear-gradient(to right,#dbdbdb 1px,transparent 1px),linear-gradient(to bottom,#dbdbdb 1px,transparent 1px);background-size:10px 10px;border-right:1px solid #dbdbdb;border-bottom:1px solid #dbdbdb"></div>
<div style="left:1049px;top:396px;width:840px;height:50px;border:1px solid #9f9f9f;border-right:0;"></div>
<div style="left:1053.5px;top:394px;width:643.0px;height:5px;background:#fff"></div>
<span class="m b" style="left:1055px;top:391px;color:#8fa600;">GC Time: 8 collections, 515.229ms Last Cause: Allocation Failure</span>
<div style="left:1052px;top:409px;width:840px;height:34px;background-image:linear-gradient(to right,#dbdbdb 1px,transparent 1px),linear-gradient(to bottom,#dbdbdb 1px,transparent 1px);background-size:10px 10px;border-right:1px solid #dbdbdb;border-bottom:1px solid #dbdbdb"></div>
<div style="left:1049px;top:459px;width:840px;height:102px;border:1px solid #9f9f9f;border-right:0;"></div>
<div style="left:1053.5px;top:457px;width:673.0px;height:5px;background:#fff"></div>
<span class="m b" style="left:1055px;top:454px;color:#c99400;">Eden Space (199.000M, 150.000M): 150.000M, 3 collections, 114.882ms</span>
<div style="left:1052px;top:472px;width:840px;height:86px;background-image:linear-gradient(to right,#dbdbdb 1px,transparent 1px),linear-gradient(to bottom,#dbdbdb 1px,transparent 1px);background-size:10px 10px;border-right:1px solid #dbdbdb;border-bottom:1px solid #dbdbdb"></div>
<div style="left:1049px;top:573px;width:840px;height:92px;border:1px solid #9f9f9f;border-right:0;"></div>
<div style="left:1053.5px;top:571px;width:323.0px;height:5px;background:#fff"></div>
<span class="m b" style="left:1055px;top:568px;color:#c46200;">Survivor 0 (66.500M, 25.000M): 0</span>
<div style="left:1052px;top:586px;width:840px;height:76px;background-image:linear-gradient(to right,#dbdbdb 1px,transparent 1px),linear-gradient(to bottom,#dbdbdb 1px,transparent 1px);background-size:10px 10px;border-right:1px solid #dbdbdb;border-bottom:1px solid #dbdbdb"></div>
<div style="left:1049px;top:677px;width:840px;height:92px;border:1px solid #9f9f9f;border-right:0;"></div>
<div style="left:1053.5px;top:675px;width:323.0px;height:5px;background:#fff"></div>
<span class="m b" style="left:1055px;top:672px;color:#c46200;">Survivor 1 (66.500M, 25.000M): 0</span>
<div style="left:1052px;top:690px;width:840px;height:76px;background-image:linear-gradient(to right,#dbdbdb 1px,transparent 1px),linear-gradient(to bottom,#dbdbdb 1px,transparent 1px);background-size:10px 10px;border-right:1px solid #dbdbdb;border-bottom:1px solid #dbdbdb"></div>
<div style="left:1049px;top:781px;width:840px;height:101px;border:1px solid #9f9f9f;border-right:0;"></div>
<div style="left:1053.5px;top:779px;width:643.0px;height:5px;background:#fff"></div>
<span class="m b" style="left:1055px;top:776px;color:#807b04;">Old Gen (400.000M, 400.000M): 399.523M, 5 collections, 400.347ms</span>
<div style="left:1052px;top:794px;width:840px;height:85px;background-image:linear-gradient(to right,#dbdbdb 1px,transparent 1px),linear-gradient(to bottom,#dbdbdb 1px,transparent 1px);background-size:10px 10px;border-right:1px solid #dbdbdb;border-bottom:1px solid #dbdbdb"></div>
<div style="left:1049px;top:894px;width:840px;height:97px;border:1px solid #9f9f9f;border-right:0;"></div>
<div style="left:1053.5px;top:892px;width:343.0px;height:5px;background:#fff"></div>
<span class="m b" style="left:1055px;top:889px;color:#eb9c0c;">Metaspace (1.008G, 9.500M): 8.737M</span>
<div style="left:1052px;top:907px;width:840px;height:81px;background-image:linear-gradient(to right,#dbdbdb 1px,transparent 1px),linear-gradient(to bottom,#dbdbdb 1px,transparent 1px);background-size:10px 10px;border-right:1px solid #dbdbdb;border-bottom:1px solid #dbdbdb"></div>
<svg class="ic" style="left:1820px;top:270px" width="59" height="730" viewBox="1820 270 59 730"><polygon shape-rendering="crispEdges" points="1837,318.500 1838,298 1839,285 1879,285 1879,318.500" fill="#34566b"/></svg>
<svg class="ic" style="left:1820px;top:270px" width="59" height="730" viewBox="1820 270 59 730"><polygon shape-rendering="crispEdges" points="1837,380.500 1838,360 1839,347 1879,347 1879,380.500" fill="#4f82a2"/></svg>
<svg class="ic" style="left:1820px;top:270px" width="59" height="730" viewBox="1820 270 59 730"><polygon shape-rendering="crispEdges" points="1837.5,442.500 1838.5,430 1839.5,413 1840.5,413 1840.5,430 1841.5,430 1841.5,442.500" fill="#8fa600"/></svg>
<svg class="ic" style="left:1820px;top:270px" width="59" height="730" viewBox="1820 270 59 730"><polygon shape-rendering="crispEdges" points="1853.5,442.500 1854.5,430 1855.5,413 1856.5,413 1856.5,430 1857.5,430 1857.5,442.500" fill="#8fa600"/></svg>
<svg class="ic" style="left:1820px;top:270px" width="59" height="730" viewBox="1820 270 59 730"><polygon shape-rendering="crispEdges" points="1871.0,442.500 1872.0,430 1873.0,413 1874.0,413 1874.0,430 1875.0,430 1875.0,442.500" fill="#8fa600"/></svg>
<svg class="ic" style="left:1820px;top:270px" width="59" height="730" viewBox="1820 270 59 730"><polygon shape-rendering="crispEdges" points="1835,557 1835,476 1836,476 1839.500,551 1852,484 1853,484 1855.500,554 1870.500,484 1871.500,484 1874,554 1879,534 1879,557" fill="#c99400"/></svg>
<svg class="ic" style="left:1820px;top:270px" width="59" height="730" viewBox="1820 270 59 730"><polygon shape-rendering="crispEdges" points="1853,661.500 1854,620 1855,587 1871,587 1872,620 1873,661.500" fill="#c46200"/></svg>
<svg class="ic" style="left:1820px;top:270px" width="59" height="730" viewBox="1820 270 59 730"><polygon shape-rendering="crispEdges" points="1837,765.500 1838,725 1839,690.500 1853,690.500 1854,725 1855,765.500" fill="#c46200"/></svg>
<svg class="ic" style="left:1820px;top:270px" width="59" height="730" viewBox="1820 270 59 730"><polygon shape-rendering="crispEdges" points="1837,878.500 1838.500,860.500 1854,860.500 1855.500,831.500 1871.500,831.500 1873.500,796 1879,796 1879,878.500" fill="#807b04"/></svg>
<svg class="ic" style="left:1820px;top:270px" width="59" height="730" viewBox="1820 270 59 730"><polygon shape-rendering="crispEdges" points="1835,987.500 1835,981 1837,978 1837.500,962 1839,945 1839,916 1853,916 1855,914.500 1879,913.500 1879,987.500" fill="#eb9c0c"/></svg>
<div style="left:0px;top:1005px;width:1879px;height:12px;background:#f0f0f0"></div>
<div style="left:839px;top:227px;width:199px;height:784px;border:3px solid #ea1522"></div>
</body></html>
